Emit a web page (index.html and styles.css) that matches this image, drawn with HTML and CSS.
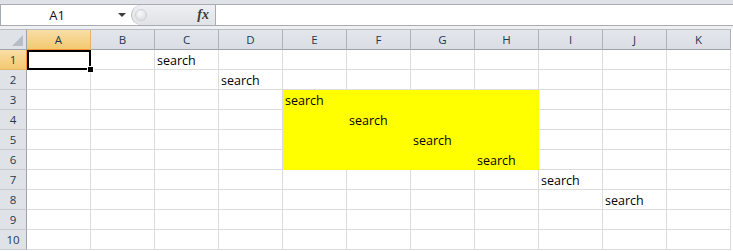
FILE: index.html
```html
<!DOCTYPE html>
<html>
<head>
<meta charset="utf-8">
<link rel="stylesheet" href="styles.css">
</head>
<body>
<div class="app">
  <div class="fbar">
    <div class="fbar-inner">
      <div class="namebox">
        <span class="ref">A1</span>
        <span class="arrow"></span>
      </div>
      <div class="pill">
        <span class="knob"></span>
        <span class="fx">fx</span>
      </div>
      <div class="formula"></div>
    </div>
  </div>
  <div class="sheet">
    <div class="corner"><span class="tri"></span></div>
    <div class="ch sel">A</div><div class="ch">B</div><div class="ch">C</div><div class="ch">D</div><div class="ch">E</div><div class="ch">F</div><div class="ch">G</div><div class="ch">H</div><div class="ch">I</div><div class="ch">J</div><div class="ch">K</div>

    <div class="rh sel">1</div><div class="c active"><span class="selbox"></span><span class="handle"></span></div><div class="c"></div><div class="c">search</div><div class="c"></div><div class="c"></div><div class="c"></div><div class="c"></div><div class="c"></div><div class="c"></div><div class="c"></div><div class="c"></div>

    <div class="rh">2</div><div class="c"></div><div class="c"></div><div class="c"></div><div class="c">search</div><div class="c"></div><div class="c"></div><div class="c"></div><div class="c"></div><div class="c"></div><div class="c"></div><div class="c"></div>

    <div class="rh">3</div><div class="c"></div><div class="c"></div><div class="c"></div><div class="c"></div><div class="c y">search</div><div class="c y"></div><div class="c y"></div><div class="c y"></div><div class="c"></div><div class="c"></div><div class="c"></div>

    <div class="rh">4</div><div class="c"></div><div class="c"></div><div class="c"></div><div class="c"></div><div class="c y"></div><div class="c y">search</div><div class="c y"></div><div class="c y"></div><div class="c"></div><div class="c"></div><div class="c"></div>

    <div class="rh">5</div><div class="c"></div><div class="c"></div><div class="c"></div><div class="c"></div><div class="c y"></div><div class="c y"></div><div class="c y">search</div><div class="c y"></div><div class="c"></div><div class="c"></div><div class="c"></div>

    <div class="rh">6</div><div class="c"></div><div class="c"></div><div class="c"></div><div class="c"></div><div class="c y"></div><div class="c y"></div><div class="c y"></div><div class="c y">search</div><div class="c"></div><div class="c"></div><div class="c"></div>

    <div class="rh">7</div><div class="c"></div><div class="c"></div><div class="c"></div><div class="c"></div><div class="c"></div><div class="c"></div><div class="c"></div><div class="c"></div><div class="c">search</div><div class="c"></div><div class="c"></div>

    <div class="rh">8</div><div class="c"></div><div class="c"></div><div class="c"></div><div class="c"></div><div class="c"></div><div class="c"></div><div class="c"></div><div class="c"></div><div class="c"></div><div class="c">search</div><div class="c"></div>

    <div class="rh">9</div><div class="c"></div><div class="c"></div><div class="c"></div><div class="c"></div><div class="c"></div><div class="c"></div><div class="c"></div><div class="c"></div><div class="c"></div><div class="c"></div><div class="c"></div>

    <div class="rh">10</div><div class="c"></div><div class="c"></div><div class="c"></div><div class="c"></div><div class="c"></div><div class="c"></div><div class="c"></div><div class="c"></div><div class="c"></div><div class="c"></div><div class="c"></div>
  </div>
</div>
</body>
</html>
```

FILE: styles.css
```css
* { box-sizing: border-box; }

html, body {
  margin: 0;
  padding: 0;
  background: #ffffff;
  width: 733px;
  height: 251px;
  overflow: hidden;
  font-family: "Open Sans", "Noto Sans", sans-serif;
}

.app {
  display: flex;
  flex-direction: column;
}

/* formula bar */
.fbar {
  height: 29px;
  padding-top: 4px;
  background: linear-gradient(#dfe3e8 0, #dfe3e8 4px, #eef0f3 4px);
}

.fbar-inner {
  display: flex;
  height: 22px;
  border-top: 1px solid #a7acb3;
  border-bottom: 1px solid #a7acb3;
  background: #ffffff;
}

.namebox {
  width: 131px;
  display: flex;
  align-items: center;
  border-left: 1px solid #a7acb3;
  background: #ffffff;
}

.ref {
  width: 112px;
  text-align: center;
  font-size: 13px;
  color: #111;
  line-height: 20px;
}

.arrow {
  margin-left: 5px;
  width: 0;
  height: 0;
  border-left: 4px solid transparent;
  border-right: 4px solid transparent;
  border-top: 4px solid #3c3c3c;
}

.pill {
  width: 85px;
  display: flex;
  align-items: center;
  justify-content: space-between;
  padding: 0 6px 0 3px;
  background: linear-gradient(#eef0f3, #dfe2e6);
  border-radius: 10px 0 0 10px;
  border-left: 1px solid #b6bbc2;
  border-right: 1px solid #a7acb3;
}

.knob {
  width: 12px;
  height: 12px;
  border-radius: 50%;
  background: radial-gradient(circle at 40% 35%, #f7f8f9, #d4d8dd);
  border: 1px solid #cdd1d6;
}

.fx {
  font-family: "Liberation Serif", "DejaVu Serif", serif;
  font-style: italic;
  font-weight: bold;
  font-size: 14px;
  color: #3a3a3a;
  line-height: 20px;
}

.formula {
  flex: 1;
  background: #ffffff;
}

/* sheet grid */
.sheet {
  display: grid;
  grid-template-columns: 27px repeat(11, 64px);
  grid-template-rows: 21px repeat(10, 20px);
  background: #ffffff;
}

.corner {
  position: relative;
  background: #dfe3e8;
  border-top: 1px solid #b9bec5;
  border-right: 1px solid #9ea3a9;
  border-bottom: 1px solid #9ea3a9;
}

.tri {
  position: absolute;
  right: 3px;
  bottom: 3px;
  width: 0;
  height: 0;
  border-left: 11px solid transparent;
  border-bottom: 11px solid #b7bdc5;
}

.ch {
  background: linear-gradient(#e3e7ec, #dadee4);
  border-top: 1px solid #b9bec5;
  border-right: 1px solid #aeb3ba;
  border-bottom: 1px solid #9ea3a9;
  text-align: center;
  font-size: 11.5px;
  line-height: 19px;
  color: #1f3754;
}

.ch.sel {
  background: linear-gradient(#f9dea6, #f3c970);
  border-bottom: 1px solid #f29436;
  border-right-color: #e1b66a;
}

.rh {
  background: #dfe3e8;
  border-right: 1px solid #9ea3a9;
  border-bottom: 1px solid #c5cad0;
  text-align: center;
  font-size: 11.5px;
  line-height: 19px;
  color: #1f3754;
}

.rh.sel {
  background: linear-gradient(#f9dea6, #f3c970);
  border-right-color: #f29436;
  border-bottom-color: #e1b66a;
}

.c {
  border-right: 1px solid #dadcdd;
  border-bottom: 1px solid #dadcdd;
  font-size: 12.5px;
  line-height: 19px;
  padding-top: 1px;
  color: #000;
  padding-left: 2px;
  white-space: nowrap;
}

.c.y {
  background: #ffff00;
  border-right-color: #ffff00;
  border-bottom-color: #ffff00;
}

.c.active {
  position: relative;
  z-index: 2;
}

.selbox {
  position: absolute;
  left: 0;
  top: 0;
  width: 64px;
  height: 20px;
  border: 2px solid #000;
}

.handle {
  position: absolute;
  left: 60px;
  top: 16px;
  width: 7px;
  height: 7px;
  background: #000;
  border: 1px solid #fff;
}
```
